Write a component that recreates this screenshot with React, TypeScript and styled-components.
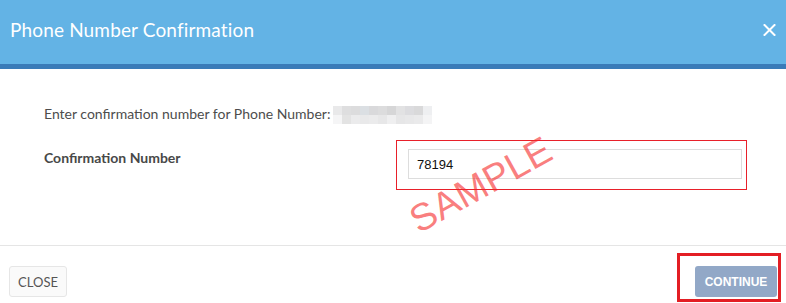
import React from "react";
import styled, { createGlobalStyle } from "styled-components";

const GlobalStyle = createGlobalStyle`
  html, body {
    margin: 0;
    padding: 0;
    background: #ffffff;
  }
  body {
    width: 786px;
    height: 303px;
    overflow: hidden;
    font-family: Lato, "Open Sans", Arial, sans-serif;
  }
`;

// pixelated (redacted) phone number
const redacted = [
  ["#e9e9ea", "#dededf", "#dcdcdd", "#dbdfe3", "#d9d9db", "#dcdcdd", "#d6d6d7", "#e2e2e3", "#dcdcdf", "#d9d9da", "#eeeff1"],
  ["#f5f5f6", "#e3e3e3", "#ebebec", "#e9e9ea", "#ebebec", "#e7e7e8", "#efeff0", "#e6e6e7", "#e8e8e9", "#eaeaeb", "#f4f4f5"],
];

function CloseIcon() {
  return (
    <svg width="13" height="12" viewBox="0 0 13 12">
      <path d="M1.5 1 L11.5 11 M11.5 1 L1.5 11" stroke="#ffffff" strokeWidth="2" strokeLinecap="square" />
    </svg>
  );
}

export default function App() {
  return (
    <>
      <GlobalStyle />
      <Modal>
        <Header>
          <Title>Phone Number Confirmation</Title>
          <DismissButton aria-label="Close">
            <CloseIcon />
          </DismissButton>
        </Header>

        <Body>
          <Intro>
            Enter confirmation number for Phone Number:
            <Redacted>
              {redacted.map((row, r) => (
                <PixelRow key={r}>
                  {row.map((c, i) => (
                    <Pixel key={i} $color={c} />
                  ))}
                </PixelRow>
              ))}
            </Redacted>
          </Intro>

          <FieldRow>
            <FieldLabel>Confirmation Number</FieldLabel>
            <Highlight>
              <Input defaultValue="78194" />
            </Highlight>
          </FieldRow>

          <Stamp>SAMPLE</Stamp>
        </Body>

        <Footer>
          <SecondaryButton>CLOSE</SecondaryButton>
          <HighlightThick>
            <PrimaryButton disabled>CONTINUE</PrimaryButton>
          </HighlightThick>
        </Footer>
      </Modal>
    </>
  );
}

const Modal = styled.div`
  width: 786px;
  height: 303px;
  display: flex;
  flex-direction: column;
  background: #ffffff;
`;

const Header = styled.div`
  height: 64px;
  border-bottom: 5px solid #3a7bb8;
  background: #63b3e5;
  display: flex;
  align-items: center;
  justify-content: space-between;
  padding: 0 10px 0 10px;
  box-sizing: content-box;
`;

const Title = styled.h4`
  margin: 0;
  margin-top: -5px;
  font-size: 19px;
  font-weight: 400;
  color: #ffffff;
  letter-spacing: 0.15px;
`;

const DismissButton = styled.button`
  border: 0;
  background: transparent;
  padding: 0;
  margin-top: -5px;
  display: flex;
  cursor: pointer;
`;

const Body = styled.div`
  position: relative;
  height: 176px;
  padding: 35px 0 0 44px;
  box-sizing: border-box;
`;

const Intro = styled.div`
  display: flex;
  align-items: center;
  font-size: 14px;
  line-height: 20px;
  color: #4d4d4d;
`;

const Redacted = styled.div`
  display: flex;
  flex-direction: column;
  margin-left: 3px;
  margin-top: 2px;
`;

const PixelRow = styled.div`
  display: flex;
`;

const Pixel = styled.span<{ $color: string }>`
  width: 9px;
  height: 9px;
  background: ${(p) => p.$color};
`;

const FieldRow = styled.div`
  display: grid;
  grid-template-columns: 352px 351px;
  align-items: start;
  margin-top: 16px;
`;

const FieldLabel = styled.label`
  font-size: 14px;
  font-weight: 700;
  line-height: 20px;
  color: #484848;
  padding-top: 8px;
`;

const Highlight = styled.div`
  border: 1px solid #e8202a;
  padding: 8px 4px 10px 11px;
`;

const Input = styled.input`
  display: block;
  width: 100%;
  height: 30px;
  box-sizing: border-box;
  border: 1px solid #dddddd;
  padding: 0 8px;
  font-family: "Liberation Sans", Arial, sans-serif;
  font-size: 13px;
  color: #111111;
  outline: none;
`;

const Stamp = styled.div`
  position: absolute;
  left: 481px;
  top: 116px;
  transform: translate(-50%, -50%) rotate(-29deg);
  font-family: "Liberation Sans", Arial, sans-serif;
  font-size: 38px;
  color: rgba(245, 40, 40, 0.6);
  letter-spacing: 0.3px;
  pointer-events: none;
`;

const Footer = styled.div`
  flex: 1;
  border-top: 1px solid #e5e5e5;
  display: flex;
  justify-content: space-between;
  align-items: flex-end;
  padding: 6px 5px 1px 9px;
`;

const SecondaryButton = styled.button`
  width: 58px;
  height: 31px;
  margin-bottom: 5px;
  border: 1px solid #e6e6e6;
  border-radius: 3px;
  background: #fafafa;
  font-family: Lato, "Open Sans", Arial, sans-serif;
  font-size: 13px;
  color: #555555;
  padding: 0;
`;

const HighlightThick = styled.div`
  border: 3px solid #e31e24;
  padding: 10px 1px 2px 15px;
`;

const PrimaryButton = styled.button`
  width: 82px;
  height: 31px;
  border: 0;
  border-radius: 3px;
  background: #92a8c7;
  color: #ffffff;
  font-family: "Liberation Sans", Arial, sans-serif;
  font-weight: 700;
  font-size: 12px;
  padding: 0;
`;
